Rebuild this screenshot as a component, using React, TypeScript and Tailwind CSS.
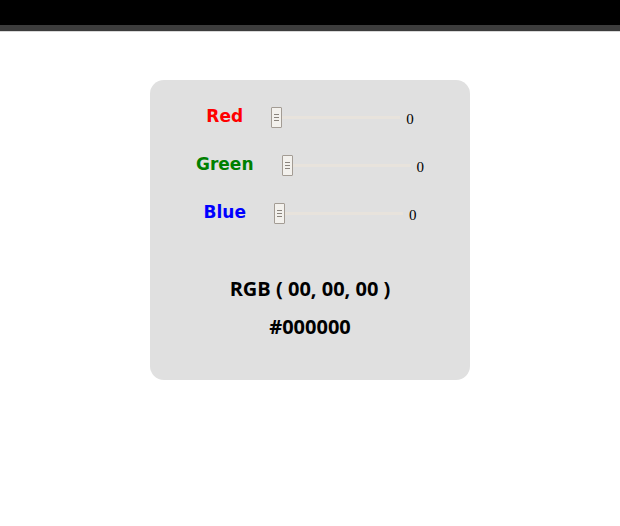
import React from "react";

type Row = { label: string; color: string; value: number };

const rows: Row[] = [
  { label: "Red", color: "text-[#ff0000]", value: 0 },
  { label: "Green", color: "text-[#008000]", value: 0 },
  { label: "Blue", color: "text-[#0000ff]", value: 0 },
];

const Slider: React.FC<{ value: number }> = ({ value }) => {
  return (
    <div className="relative w-[129px] h-[21px] flex items-center">
      <div className="w-full h-[3px] bg-[#e8e3dc]" />
      {/* thumb */}
      <div
        className="absolute top-0 w-[11px] h-[21px] bg-[#f3f1ed] border border-[#a39c94] rounded-[1px] flex flex-col items-center justify-center gap-[2px]"
        style={{ left: `${(value / 255) * 118}px` }}
      >
        <div className="w-[5px] h-px bg-[#8a847d]" />
        <div className="w-[5px] h-px bg-[#8a847d]" />
        <div className="w-[5px] h-px bg-[#8a847d]" />
      </div>
    </div>
  );
};

const App: React.FC = () => {
  return (
    <div className="min-h-screen bg-white">
      {/* Top bar */}
      <div className="h-[25px] bg-black" />
      <div className="h-[6px] bg-[#3c3c3c]" />
      <div className="h-px bg-[#d8d8d8]" />

      {/* Color card */}
      <div className="mt-[48px] ml-[150px] w-[320px] h-[300px] bg-[#e0e0e0] rounded-[14px] flex flex-col items-center pt-[13px]">
        {rows.map((r) => (
          <div key={r.label} className="h-[48px] flex items-center">
            <span
              className={`${r.color} font-bold text-[17px] mr-[28px] font-['DejaVu_Sans',sans-serif]`}
            >
              {r.label}
            </span>
            <Slider value={r.value} />
            <span className="ml-[6px] mt-[4px] text-[15px] text-black font-['Liberation_Serif',serif]">
              {r.value}
            </span>
          </div>
        ))}

        <div className="mt-[33px] text-center font-bold text-[20px] text-black leading-[38px] font-['Open_Sans',sans-serif]">
          <div>RGB ( 00, 00, 00 )</div>
          <div>#000000</div>
        </div>
      </div>
    </div>
  );
};

export default App;
